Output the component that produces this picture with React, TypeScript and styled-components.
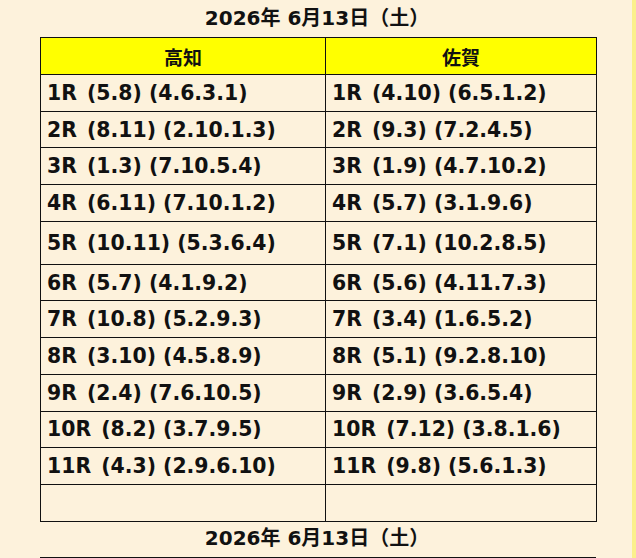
import React from "react";
import styled, { createGlobalStyle } from "styled-components";

const GlobalStyle = createGlobalStyle`
  html, body {
    margin: 0;
    padding: 0;
    background: #fdf2dc;
  }
  body {
    font-family: "DejaVu Sans", "Noto Sans CJK JP", sans-serif;
    color: #111;
  }
`;

const Page = styled.div`
  width: 636px;
  height: 558px;
  overflow: hidden;
  background: #fdf2dc;
  box-sizing: border-box;
  border-right: 4px solid #fbf08c;
`;

const Title = styled.div<{ $h: number }>`
  height: ${(p) => p.$h}px;
  display: flex;
  align-items: center;
  justify-content: center;
  font-size: 20px;
  font-weight: bold;
  padding-left: 2px;
  padding-bottom: 5px;
  box-sizing: border-box;
`;

const Table = styled.table`
  margin-left: 40px;
  width: 556px;
  border-collapse: collapse;
  table-layout: fixed;
`;

const HeadCell = styled.th`
  background: #ffff00;
  border: 1px solid #111;
  height: 36px;
  padding: 0;
  font-size: 19px;
  font-weight: bold;
  text-align: center;
`;

const Cell = styled.td<{ $tall?: boolean }>`
  border: 1px solid #111;
  height: ${(p) => (p.$tall ? 42 : 35.7)}px;
  padding: 0 0 0 6px;
  font-size: 20.4px;
  font-weight: bold;
  white-space: pre;
  box-sizing: content-box;
`;

const Race = styled.span`
  margin-right: 3px;
`;

const NextTableEdge = styled.div`
  margin-left: 40px;
  width: 556px;
  height: 2px;
  border-top: 1px solid #111;
`;

type Pick = { race: string; a: string; b: string };

const kochi: Pick[] = [
  { race: "1R", a: "(5.8)", b: "(4.6.3.1)" },
  { race: "2R", a: "(8.11)", b: "(2.10.1.3)" },
  { race: "3R", a: "(1.3)", b: "(7.10.5.4)" },
  { race: "4R", a: "(6.11)", b: "(7.10.1.2)" },
  { race: "5R", a: "(10.11)", b: "(5.3.6.4)" },
  { race: "6R", a: "(5.7)", b: "(4.1.9.2)" },
  { race: "7R", a: "(10.8)", b: "(5.2.9.3)" },
  { race: "8R", a: "(3.10)", b: "(4.5.8.9)" },
  { race: "9R", a: "(2.4)", b: "(7.6.10.5)" },
  { race: "10R", a: "(8.2)", b: "(3.7.9.5)" },
  { race: "11R", a: "(4.3)", b: "(2.9.6.10)" },
];

const saga: Pick[] = [
  { race: "1R", a: "(4.10)", b: "(6.5.1.2)" },
  { race: "2R", a: "(9.3)", b: "(7.2.4.5)" },
  { race: "3R", a: "(1.9)", b: "(4.7.10.2)" },
  { race: "4R", a: "(5.7)", b: "(3.1.9.6)" },
  { race: "5R", a: "(7.1)", b: "(10.2.8.5)" },
  { race: "6R", a: "(5.6)", b: "(4.11.7.3)" },
  { race: "7R", a: "(3.4)", b: "(1.6.5.2)" },
  { race: "8R", a: "(5.1)", b: "(9.2.8.10)" },
  { race: "9R", a: "(2.9)", b: "(3.6.5.4)" },
  { race: "10R", a: "(7.12)", b: "(3.8.1.6)" },
  { race: "11R", a: "(9.8)", b: "(5.6.1.3)" },
];

function PickText({ p }: { p: Pick }) {
  return (
    <>
      <Race>{p.race} </Race>
      {p.a} {p.b}
    </>
  );
}

export default function App() {
  return (
    <>
      <GlobalStyle />
      <Page>
        <Title $h={37}>2026年 6月13日（土）</Title>
        <Table>
          <colgroup>
            <col style={{ width: "285px" }} />
            <col style={{ width: "271px" }} />
          </colgroup>
          <thead>
            <tr>
              <HeadCell>高知</HeadCell>
              <HeadCell>佐賀</HeadCell>
            </tr>
          </thead>
          <tbody>
            {kochi.map((k, i) => (
              <tr key={k.race}>
                <Cell $tall={i === 4}>
                  <PickText p={k} />
                </Cell>
                <Cell $tall={i === 4}>
                  <PickText p={saga[i]} />
                </Cell>
              </tr>
            ))}
            <tr>
              <Cell />
              <Cell />
            </tr>
          </tbody>
        </Table>
        <Title $h={35}>2026年 6月13日（土）</Title>
        <NextTableEdge />
      </Page>
    </>
  );
}
